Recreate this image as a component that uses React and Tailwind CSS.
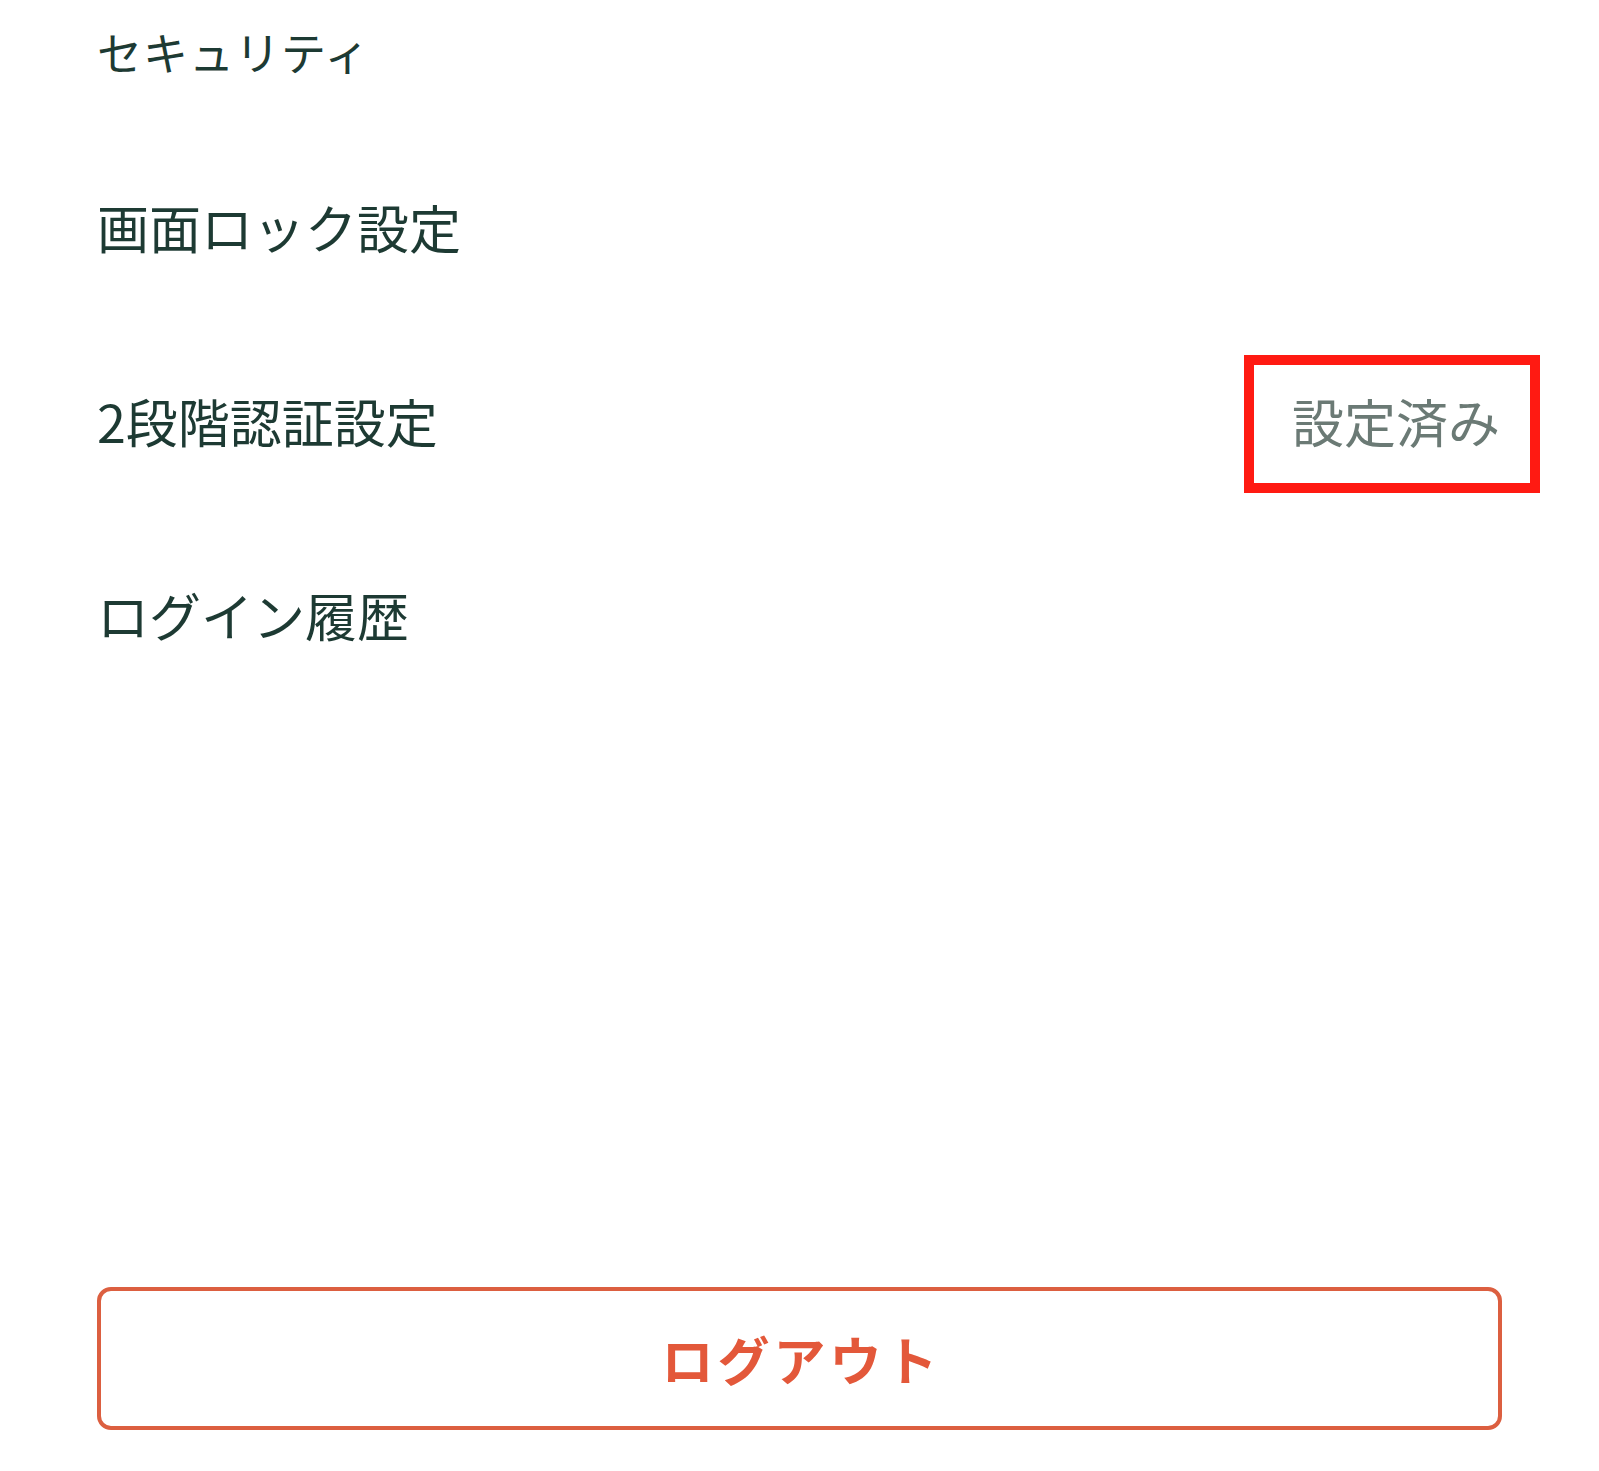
export default function App() {
  const rows = [
    { label: "画面ロック設定" },
    { label: "2段階認証設定", value: "設定済み" },
    { label: "ログイン履歴" },
  ];

  return (
    <div
      className="flex h-[1471px] w-full flex-col bg-white px-[97px] pb-[41px] text-[#1d3a33]"
      style={{ fontFamily: '"Noto Sans CJK JP", "Noto Sans", sans-serif' }}
    >
      <div className="flex h-[130px] items-start pt-[29px]">
        <h2 className="text-[45px] leading-none tracking-[1px]">セキュリティ</h2>
      </div>

      <ul>
        {rows.map((r) => (
          <li key={r.label} className="flex h-[194px] items-center justify-between">
            <span className="text-[52px] leading-none">{r.label}</span>
            {r.value && (
              <span className="relative mr-[2px] text-[52px] leading-none text-[#6b7a75]">
                {r.value}
                <span className="pointer-events-none absolute -top-[40px] -bottom-[46px] -left-[48px] -right-[40px] border-[10px] border-[#ff1a12]" />
              </span>
            )}
          </li>
        ))}
      </ul>

      <button className="mt-auto flex h-[143px] w-full items-center justify-center rounded-[14px] border-[4px] border-[#dc5f40] bg-white pl-[4px] text-[52px] font-bold leading-none tracking-[4px] text-[#e3583a]">
        ログアウト
      </button>
    </div>
  );
}
